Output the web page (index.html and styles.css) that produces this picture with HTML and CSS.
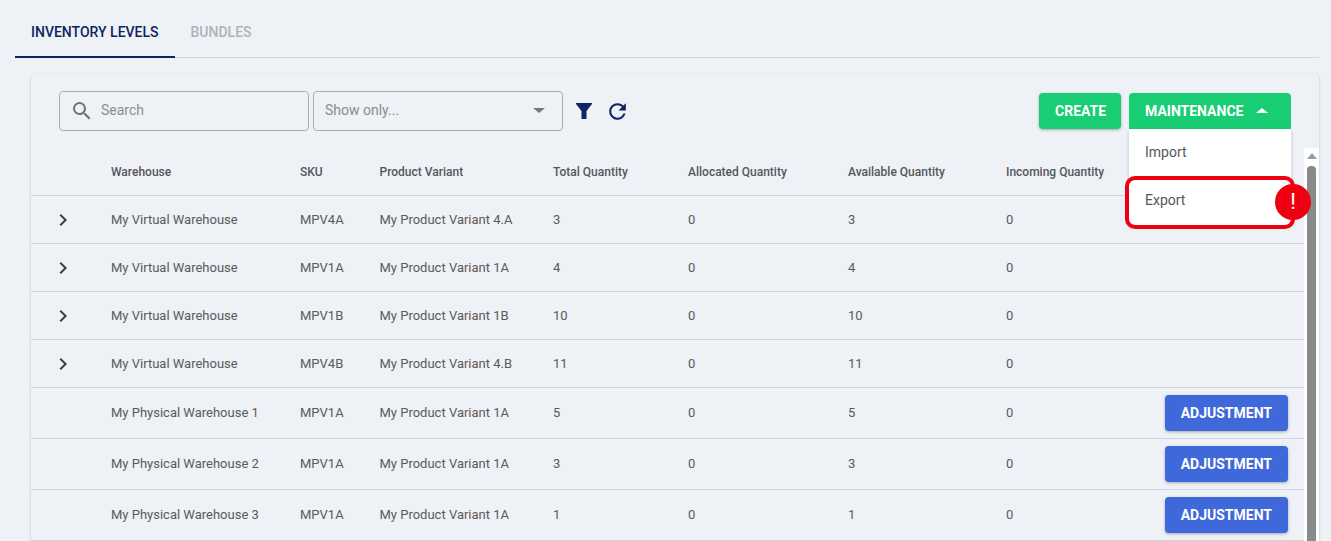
FILE: index.html
```html
<!DOCTYPE html>
<html lang="en">
<head>
  <meta charset="UTF-8" />
  <meta name="viewport" content="width=device-width, initial-scale=1.0" />
  <title>Inventory Levels</title>
  <link rel="stylesheet" href="styles.css">
</head>
<body>
  <div class="tabs">
    <div class="tab active">Inventory Levels</div>
    <div class="tab">Bundles</div>
  </div>

  <div class="card">
    <div class="toolbar">
      <div class="field search">
        <svg class="search-icon" viewBox="0 0 24 24"><path d="M15.5 14h-.79l-.28-.27A6.47 6.47 0 0 0 16 9.5 6.5 6.5 0 1 0 9.5 16c1.61 0 3.09-.59 4.23-1.57l.27.28v.79l5 4.99L20.49 19l-4.99-5zm-6 0C7.01 14 5 11.99 5 9.5S7.01 5 9.5 5 14 7.01 14 9.5 11.99 14 9.5 14z"/></svg>
        <span>Search</span>
      </div>
      <div class="field select">
        <span>Show only...</span>
        <i class="select-caret"></i>
      </div>
      <svg class="tool-icon filter" viewBox="0 0 24 24"><path d="M4 4h16v1l-5.500 7v8h-5v-8L4 5z"/></svg>
      <svg class="tool-icon refresh" viewBox="0 0 24 24"><path d="M17.65 6.350A7.950 7.950 0 0 0 12 4a8 8 0 1 0 7.730 10h-2.080A6 6 0 1 1 12 6c1.660 0 3.140.69 4.220 1.780L13 11h7V4l-2.350 2.350z"/></svg>
      <div class="actions">
        <button class="btn green create">Create</button>
        <div class="maintenance">
          <button class="btn green maint-btn">Maintenance <i class="up-caret"></i></button>
          <div class="menu">
            <div class="menu-item">Import</div>
            <div class="menu-item">Export</div>
          </div>
          <div class="highlight"></div>
          <div class="alert">!</div>
        </div>
      </div>
    </div>

    <div class="table-wrap">
      <table>
        <colgroup>
          <col class="c-expand"><col class="c-wh"><col class="c-sku"><col class="c-variant">
          <col class="c-total"><col class="c-alloc"><col class="c-avail"><col class="c-inc"><col>
        </colgroup>
        <thead>
          <tr>
            <th></th><th>Warehouse</th><th>SKU</th><th>Product Variant</th><th>Total Quantity</th>
            <th>Allocated Quantity</th><th>Available Quantity</th><th>Incoming Quantity</th><th></th>
          </tr>
        </thead>
        <tbody>
          <tr>
            <td class="expand"><svg viewBox="0 0 24 24"><path d="M8.590 16.590 13.170 12 8.590 7.410 10 6l6 6-6 6z"/></svg></td>
            <td>My Virtual Warehouse</td><td>MPV4A</td><td>My Product Variant 4.A</td><td>3</td><td>0</td><td>3</td><td>0</td><td></td>
          </tr>
          <tr>
            <td class="expand"><svg viewBox="0 0 24 24"><path d="M8.590 16.590 13.170 12 8.590 7.410 10 6l6 6-6 6z"/></svg></td>
            <td>My Virtual Warehouse</td><td>MPV1A</td><td>My Product Variant 1A</td><td>4</td><td>0</td><td>4</td><td>0</td><td></td>
          </tr>
          <tr>
            <td class="expand"><svg viewBox="0 0 24 24"><path d="M8.590 16.590 13.170 12 8.590 7.410 10 6l6 6-6 6z"/></svg></td>
            <td>My Virtual Warehouse</td><td>MPV1B</td><td>My Product Variant 1B</td><td>10</td><td>0</td><td>10</td><td>0</td><td></td>
          </tr>
          <tr>
            <td class="expand"><svg viewBox="0 0 24 24"><path d="M8.590 16.590 13.170 12 8.590 7.410 10 6l6 6-6 6z"/></svg></td>
            <td>My Virtual Warehouse</td><td>MPV4B</td><td>My Product Variant 4.B</td><td>11</td><td>0</td><td>11</td><td>0</td><td></td>
          </tr>
          <tr class="tall">
            <td></td><td>My Physical Warehouse 1</td><td>MPV1A</td><td>My Product Variant 1A</td><td>5</td><td>0</td><td>5</td><td>0</td>
            <td class="row-action"><button class="btn blue">Adjustment</button></td>
          </tr>
          <tr class="tall">
            <td></td><td>My Physical Warehouse 2</td><td>MPV1A</td><td>My Product Variant 1A</td><td>3</td><td>0</td><td>3</td><td>0</td>
            <td class="row-action"><button class="btn blue">Adjustment</button></td>
          </tr>
          <tr class="tall">
            <td></td><td>My Physical Warehouse 3</td><td>MPV1A</td><td>My Product Variant 1A</td><td>1</td><td>0</td><td>1</td><td>0</td>
            <td class="row-action"><button class="btn blue">Adjustment</button></td>
          </tr>
        </tbody>
      </table>
      <div class="scrollbar">
        <i class="scroll-up"></i>
        <div class="scroll-thumb"></div>
      </div>
    </div>
  </div>
</body>
</html>
```

FILE: styles.css
```css
html, body {
  margin: 0;
  height: 541px;
  overflow: hidden;
}
body {
  background-color: #eef1f6;
  color: #5a5a5a;
  font-family: Roboto, sans-serif;
  font-size: 13px;
  padding: 0 12px 0 15px;
  box-sizing: border-box;
}

/* tabs */
.tabs {
  display: flex;
  height: 58px;
  box-sizing: border-box;
  border-bottom: 1px solid #d3d6dc;
}
.tab {
  height: 58px;
  box-sizing: border-box;
  padding: 24px 16px 0;
  font-size: 14px;
  font-weight: 500;
  line-height: 16px;
  text-transform: uppercase;
  color: #b0b2b7;
}
.tab.active {
  color: #0f2460;
  border-bottom: 2px solid #0f2460;
}

/* card */
.card {
  position: relative;
  margin: 16px 0 0 16px;
  width: 1288px;
  height: 467px;
  background-color: #eef1f6;
  border-radius: 4px 4px 0 0;
  box-shadow: 0 1px 3px rgba(0, 0, 0, 0.22);
}
.toolbar {
  display: flex;
  align-items: center;
  height: 74px;
  padding: 0 28px;
  box-sizing: border-box;
}
.field {
  display: flex;
  align-items: center;
  width: 250px;
  height: 40px;
  box-sizing: border-box;
  border: 1px solid #a9abaf;
  border-radius: 4px;
  font-size: 14px;
  color: #8b8d91;
}
.field span { padding-bottom: 2px; }
.search {
  margin-right: 4px;
  padding-left: 10px;
}
.search-icon {
  width: 24px;
  height: 24px;
  margin-right: 7px;
  fill: #6f7175;
}
.select {
  justify-content: space-between;
  padding: 0 17px 0 11px;
}
.select-caret {
  margin-bottom: 1px;
  border-left: 6px solid transparent;
  border-right: 6px solid transparent;
  border-top: 5px solid #77797d;
}
.tool-icon {
  width: 25px;
  height: 25px;
  fill: #0f2460;
}
.filter {
  width: 24px;
  height: 24px;
  margin-left: 9px;
}
.refresh { margin-left: 9px; }
.actions {
  display: flex;
  gap: 8px;
  margin-left: auto;
}
.btn {
  display: block;
  border: none;
  border-radius: 4px;
  color: #fff;
  font-family: Roboto, sans-serif;
  font-size: 14px;
  font-weight: 700;
  text-transform: uppercase;
  padding: 0 16px 1px;
  box-shadow: 0 1px 3px rgba(0, 0, 0, 0.3);
}
.green { background-color: #18cd74; height: 36px; }
.blue { background-color: #3f69db; height: 36px; }
.create {
  width: 82px;
  text-align: left;
}
.maintenance { position: relative; }
.maint-btn {
  display: flex;
  align-items: center;
  width: 162px;
  border-radius: 4px 4px 0 0;
  box-shadow: none;
}
.up-caret {
  margin: 0 0 0 13px;
  border-left: 6px solid transparent;
  border-right: 6px solid transparent;
  border-bottom: 5px solid #fff;
}

/* dropdown + annotation */
.menu {
  position: absolute;
  z-index: 2;
  top: 36px;
  left: 0;
  width: 162px;
  background-color: #fff;
  border-radius: 0 0 4px 4px;
  box-shadow: 0 2px 4px rgba(0, 0, 0, 0.2);
}
.menu-item {
  height: 48px;
  line-height: 46px;
  padding-left: 16px;
  font-size: 14px;
  color: #55575b;
}
.highlight {
  position: absolute;
  z-index: 3;
  top: 83px;
  left: -4px;
  width: 170px;
  height: 53px;
  box-sizing: border-box;
  border: 4px solid #ee0011;
  border-radius: 10px;
}
.alert {
  position: absolute;
  z-index: 4;
  top: 91px;
  left: 146px;
  width: 36px;
  height: 36px;
  border-radius: 50%;
  background-color: #ee0011;
  color: #fff;
  font-size: 22px;
  line-height: 36px;
  text-align: center;
}

/* table */
.table-wrap {
  display: flex;
  align-items: flex-start;
}
table {
  width: 1273px;
  flex: none;
  table-layout: fixed;
  border-collapse: collapse;
}
.c-expand { width: 80px; }
.c-wh { width: 189px; }
.c-sku { width: 79.5px; }
.c-variant { width: 173.5px; }
.c-total { width: 135px; }
.c-alloc { width: 160px; }
.c-avail { width: 158px; }
.c-inc { width: 140px; }
th {
  height: 47px;
  padding: 0;
  text-align: left;
  font-size: 12px;
  font-weight: 500;
  color: #55575b;
  border-bottom: 1px solid #d3d6dc;
}
td {
  height: 47px;
  padding: 0;
  border-bottom: 1px solid #d3d6dc;
}
.tall td {
  height: 48px;
  padding-bottom: 2px;
}
.expand svg {
  display: block;
  width: 24px;
  height: 24px;
  margin-left: 20px;
  fill: #3c3e42;
}
.tall .row-action {
  height: 50px;
  padding: 0 16px 0 0;
}
.row-action .btn { margin-left: auto; }

/* scrollbar */
.scrollbar {
  width: 15px;
  height: 393px;
  overflow: hidden;
  background-color: #fff;
}
.scroll-up {
  display: block;
  width: 0;
  margin: 5px 0 0 3px;
  border-left: 5px solid transparent;
  border-right: 5px solid transparent;
  border-bottom: 6px solid #9a9a9a;
}
.scroll-thumb {
  width: 9px;
  height: 376px;
  margin: 7px 0 0 3px;
  background-color: #8a8a8a;
  border-radius: 4px 4px 0 0;
}
```
